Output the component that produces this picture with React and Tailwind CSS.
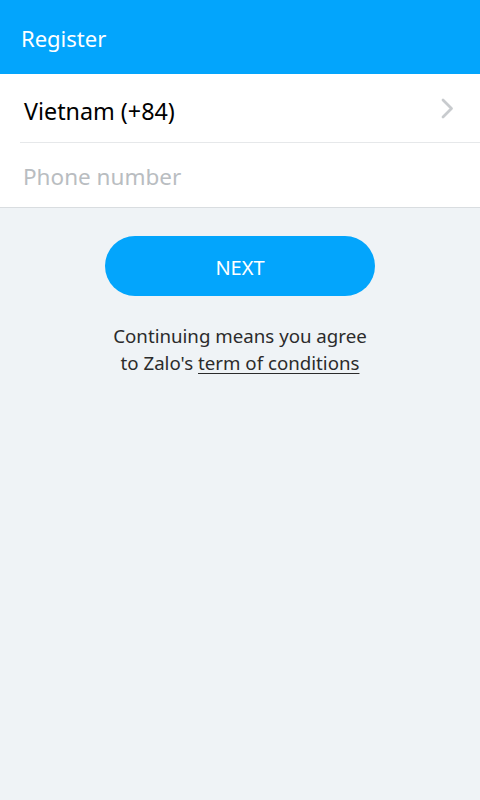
export default function App() {
  return (
    <div className="w-[480px] h-[800px] bg-[#eff3f6] flex flex-col" style={{ fontFamily: '"Noto Sans", "Open Sans", sans-serif' }}>
      <div className="h-[74px] bg-[#03a5fc] flex items-center pl-[21px] pt-[2px]">
        <span className="text-white text-[22px]">Register</span>
      </div>
      <div className="bg-white border-b border-[#d9dde0]">
        <div className="h-[68px] flex items-center justify-between pl-[24px] pr-[26px]">
          <span className="text-black text-[23.3px] leading-[30px] pt-[5px]">Vietnam (+84)</span>
          <svg width="13" height="21" viewBox="0 0 13 21" fill="none" className="mt-[1px]">
            <path d="M2 2 L10.5 10.5 L2 19" stroke="#c8cbce" strokeWidth="2.8" strokeLinecap="round" strokeLinejoin="round" />
          </svg>
        </div>
        <div className="ml-[20px] border-t border-[#e6e8ea] h-[65px] flex items-center pl-[3px]">
          <span className="text-[#b9bdc1] text-[22.5px] leading-[30px] pt-[4px]">Phone number</span>
        </div>
      </div>
      <div className="flex flex-col items-center pt-[28px]">
        <button className="w-[270px] h-[60px] rounded-full bg-[#03a5fc] text-white text-[20px] pt-[3px]">NEXT</button>
        <p className="mt-[26px] text-center text-[#2b2b2b] text-[18.7px] leading-[27px]">
          Continuing means you agree<br />to Zalo's <span className="underline underline-offset-[3px]">term of conditions</span>
        </p>
      </div>
    </div>
  );
}
